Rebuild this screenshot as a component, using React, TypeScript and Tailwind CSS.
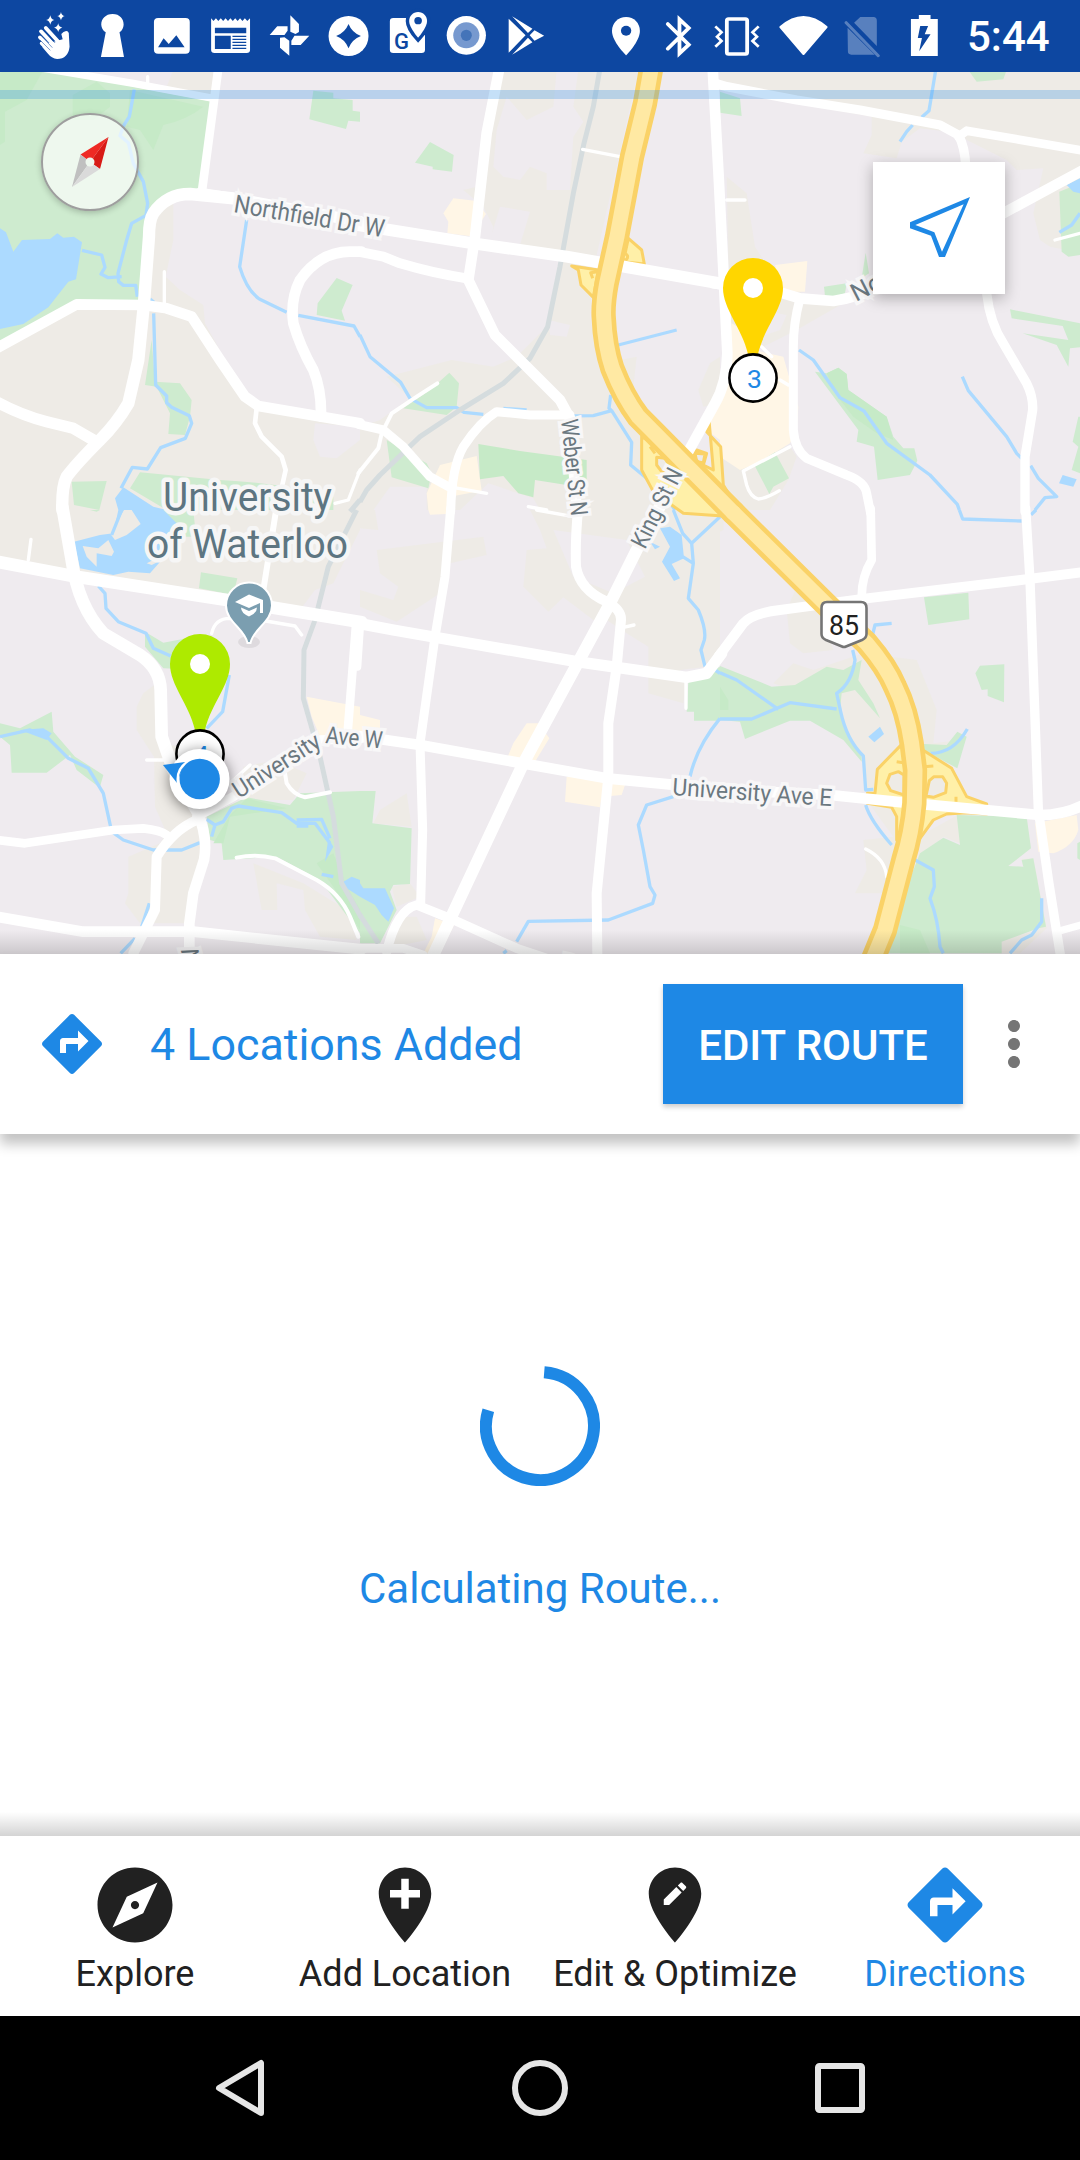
import React from "react";

type Line = [number, string];
type Tile = {
  x: number;
  y: number;
  beige: string[];
  pink?: string[];
  tan: string[];
  green: string[];
  deep?: string[];
  lake: string[];
  clearing?: string[];
  stream: string;
  rail?: string;
  ramps?: string[];
  holes?: string[];
  roads: Line[];
  highway?: string;
};

/* Map geometry, split in 360px wide tiles; each tile uses three units per pixel. */
const tiles: Tile[] = [
  {
    x: 0,
    y: 70,
    beige: [
      "M0 820L230 700L430 690L450 440L520 400L520 510L497 620L540 660L610 705L615 760L730 970L780 1010L1080 1060V1320H0Z",
      "M520 0H640V80L500 50Z",
    ],
    pink: ["M945 1060L940 1110L960 1160L1010 1165L1080 1110V1070Z"],
    tan: [],
    green: [
      "M0 0H160L400 50L640 95L605 360L540 360L470 400L440 450L415 690L230 690L0 820Z",
      "M940 62L1000 68V85L1058 90V122L1080 125V155L1045 152L1038 177L928 148Z",
      "M1010 624L1058 645L1025 722L1035 752L950 735L953 700Z",
      "M455 810L465 935L540 940L575 990L570 1040L555 1095L505 1092L510 1030L470 950L435 945Z",
      "M215 1235L320 1233L298 1320L222 1305Z",
      "M420 1207L660 1230Q850 1240 1000 1280L1000 1320H500L390 1255Z",
    ],
    deep: [
      "M390 60L610 110Q560 150 490 165L460 240L420 180L380 170Z",
      "M20 0H130L80 90L15 125V215L0 225V10Z",
      "M218 75L290 35L330 70V110L280 150H218Z",
    ],
    lake: [
      "M0 475L18 487L40 545L66 510L150 507L172 490L190 503L222 500L246 517L228 628L205 635L145 712L70 762L0 777Z",
      "M370 1252L460 1310L500 1320H355L345 1285Z",
    ],
    stream:
      "M403 58L388 140L372 165L360 197L385 218L400 280L430 335L443 400L438 436L395 460L380 510L354 610L356 635L370 646H407L412 680M246 541L305 555L315 592L303 612L325 623L365 620M450 687L462 697M461 730L467 945L500 978V998L515 1012L568 1037L575 1060L556 1105L482 1133L442 1197L397 1192L363 1255M740 450L719 590Q740 660 778 687L860 727M895 736L1062 768L1080 800",
    rail: "M1080 1290L1050 1325",
    roads: [
      [26, "M655 -5L605 370"],
      [32, "M-20 840L230 703L430 705L500 715L575 740L660 870L735 980L775 1008L1080 1060"],
      [37, "M700 385L570 372Q500 372 460 430Q447 450 447 500L432 700L415 870L385 1000Q350 1060 300 1110Q230 1180 200 1220Q185 1250 187 1320"],
      [34, "M-20 990Q60 1035 140 1055L220 1075L280 1110"],
      [22, "M130 -5L400 40L640 85"],
      [34, "M600 370L730 390L1080 455"],
      [32, "M1085 545H1050Q960 545 900 630Q870 690 880 760Q900 830 940 900Q965 960 963 1040"],
      [10, "M493 605V710M443 20V45"],
      [14, "M770 1015L765 1060L785 1100L845 1160L857 1200L830 1320"],
      [10, "M1080 1200L1045 1290L1005 1300"],
    ],
  },
  {
    x: 360,
    y: 70,
    beige: [
      "M400 0H835L700 600L690 740L720 880L830 1040L860 1100L1080 1320H0V1070L60 1050L150 985L80 920L275 870L400 890L470 860L560 770L600 560L390 530L400 470L370 410L310 360L350 350Z",
      "M1080 860L1050 880L1015 960L1030 1010L1080 1000Z",
      "M780 870L830 860L820 950L800 910Z",
    ],
    pink: [
      "M590 0H655L640 110L670 155L640 200L630 360H560V310L510 290L480 330L430 320L400 290L410 180L440 80L500 150L580 110Z",
      "M420 410L510 425L480 525L390 510Z",
      "M565 750L630 765L620 800L570 795Z",
      "M385 1240L520 1285L540 1320H300Z",
      "M90 1250L200 1250L200 1320H40Z",
    ],
    tan: [
      "M280 385L350 393L378 432L360 460L345 500L262 490L265 455L250 430Z",
      "M240 1185L350 1158L365 1262L270 1280L260 1320H205L200 1270Z",
      "M1050 1010L1080 1000V1110L1040 1080Z",
    ],
    green: [
      "M210 216L281 255L276 305L218 298V290L165 278Z",
      "M268 908L297 940L290 1010L260 1035L130 1015L210 960Z",
      "M80 1110L200 1180L215 1210L205 1255L95 1222Z",
    ],
    deep: ["M355 1122L480 1143L680 1170V1240L620 1245L525 1230L520 1282L475 1270L430 1218L360 1228Z"],
    lake: [],
    stream:
      "M0 795L30 860L122 937L150 985L200 1013H290L312 1027L370 1033M430 1015L500 1020M595 1038L700 1037L755 1022L815 1117L812 1185L860 1225M755 1022L747 1015L752 975M775 825L950 780M935 1305L945 1320",
    rail: "M720 -5L700 110L672 220L640 370L600 590L563 770L510 865L430 940L300 1020L180 1100L60 1215L20 1260L0 1295",
    ramps: [
      "M805 505L845 540L853 582L790 575Z",
      "M635 588L655 600L663 645L700 682L715 600Z",
      "M793 550Q808 555 800 568Q790 572 785 562",
      "M712 605L692 608L698 625",
      "M845 1100V1200L880 1265L970 1330L1120 1340L985 1180Z",
      "M1047 1050L1040 1085L1082 1130L1090 1245L1130 1310L985 1165L1010 1140L1040 1150L1030 1185L1060 1200Z",
      "M870 1130L885 1150",
    ],
    holes: ["M890 1162L915 1165L930 1190L905 1205L890 1185Z", "M1005 1150L1035 1152L1030 1178L1010 1175Z"],
    roads: [
      [32, "M418 -5L380 190L345 500L325 630L405 795L510 900L600 990L630 1045L650 1320"],
      [36, "M-5 465L340 520L620 560L1090 642"],
      [30, "M-5 545L70 560L120 580Q220 610 320 625"],
      [27, "M630 1035L510 1035L410 1025Q360 1055 310 1130Q275 1190 272 1325"],
      [27, "M-5 1063L70 1080L130 1130L210 1220L265 1250"],
      [12, "M232 940L170 980L95 1030L65 1090L55 1135L-5 1210"],
      [10, "M265 1250L380 1270M668 238L780 260M505 1310L560 1320"],
    ],
    highway: "M874 -8L855 100L816 260L771 500L740 640Q729 700 731 740Q735 830 757 895Q790 980 835 1040L885 1090L1120 1328",
  },
  {
    x: 720,
    y: 70,
    beige: [
      "M0 0H1080V480L1040 540L990 530L960 510L940 430L970 295L890 300L860 270L740 210L720 190L600 175L545 215L530 265L430 250L455 195V140L0 60Z",
      "M20 320L80 370L105 530L150 600L260 680L370 700L230 780L130 830L60 830L25 780V580Z",
      "M0 1150L60 1195L110 1130L210 1130L230 1160L205 1230L150 1320H0Z",
    ],
    pink: ["M150 725L200 735L180 780L120 800Z"],
    tan: [
      "M165 585L262 573L255 665L190 665Z",
      "M35 760L70 780L100 840L190 860L210 930L235 1010L230 1080L210 1120L110 1180L60 1200L0 1160V1000L20 930Z",
    ],
    green: [
      "M745 0H860L850 28L770 35Z",
      "M0 65L60 85L65 138L0 128Z",
      "M312 650L380 640L375 670L350 678H315Z",
      "M437 548L447 610L425 625Z",
      "M870 718L1080 760V832L1050 835L1045 890L1010 825L908 790L1045 810L1028 768L875 745Z",
      "M1018 365L1080 340V555L1045 560L1025 545Z",
      "M285 905L320 910L355 893L380 912L385 960L500 1040L520 1100L550 1135H583L592 1172L570 1215L473 1230L462 1130L410 1115L415 1080Z",
      "M103 1185L165 1147L207 1225L160 1250L148 1272Z",
      "M1075 1040H1080V1210L1055 1200L1075 1130L1058 1115Z",
    ],
    deep: ["M320 910L345 970L400 1040L470 1090L520 1110L500 1040L385 960L380 912L355 893Z"],
    lake: ["M1040 345L1080 325V370L1060 365Z", "M1028 1215L1070 1228L1060 1250L1017 1240Z"],
    stream:
      "M648 -5L627 122L605 142M578 165L560 185L540 215M1080 430L1055 465L1018 487M237 840L280 870L360 983L432 1023L500 1120L630 1215L712 1303L718 1320M727 920L745 962L860 1100L890 1150L905 1165M932 1187L955 1225L1010 1280L975 1283L945 1320",
    roads: [
      [28, "M-20 38L20 50L230 90L420 120L660 165L715 195Q735 230 737 290L750 450L800 670Q810 760 850 820L920 940Q940 980 938 1020L915 1160V1325"],
      [26, "M715 200L740 182L1090 242"],
      [32, "M-20 640L190 670L240 685L340 693Q420 680 480 650L840 435L1090 300"],
      [27, "M240 685Q220 760 220 830V1080Q225 1140 260 1165L380 1215Q435 1235 440 1270L452 1330"],
      [10, "M20 390H75M1005 510L1080 490M210 1130L70 1203L80 1245Q90 1280 115 1287Q140 1285 178 1262M180 930L205 945M125 830L155 860"],
      [32, "M-22 -5L-5 300L10 600L22 850Q20 940 -15 1000L-98 1150"],
    ],
  },
  {
    x: 0,
    y: 510,
    beige: [
      "M0 0H1080V60L1000 220L945 240L900 300L820 285L680 260L230 190L0 140Z",
      "M410 590L430 550L470 520L500 700L560 720L600 900L610 1000L575 1150L560 1240H420L375 1180L385 1150V1040L480 1000L500 970L465 890L462 740L410 660Z",
      "M760 1060L910 1120L1040 1200L1070 1290L960 1280L915 1200L910 1140L830 1120L832 1200H785Z",
      "M730 770L830 750L920 790L880 870L730 870Z",
    ],
    tan: ["M920 560L1080 590V690L960 680L935 620Z"],
    green: [
      "M603 187L712 205L700 255L597 235Z",
      "M435 365L490 398L560 385L600 400V480L490 475L435 410Z",
      "M0 640L60 655L155 605L160 665L225 740L310 795L300 830L315 845L230 780L210 735L140 788H35L30 705L0 680Z",
      "M620 920L740 862L870 885L900 850L1080 843V1270L960 1110L830 1040L670 1050L665 1000L630 990Z",
      "M270 0H300L290 5Z",
      "M480 0H580L585 50V80H530L500 60Z",
    ],
    deep: ["M740 865L690 915L640 1000L670 1000L690 920L860 895Z", "M950 1060L1000 1030L1040 1130L1080 1200V1260L1000 1130Z"],
    lake: [
      "M355 0H490L530 40L520 90L485 150L450 190L385 185L340 195L240 175L222 95L300 75L340 70Z",
      "M1030 1115L1055 1100L1080 1110V1160L1040 1135Z",
      "M60 660L130 655L155 670L140 690Z",
      "M985 985L1000 1010L975 1055Z",
    ],
    clearing: ["M372 0H395L422 42L380 75L345 90L330 70L355 30Z", "M248 108L295 115L325 90L342 125L335 138L290 130L290 170L260 140Z", "M440 160L480 140L485 150L455 165Z"],
    stream:
      "M365 0L335 75M0 680L90 660L140 680L205 745L265 775L310 850L335 965L370 990L460 1020H545L600 998M295 228L315 250L318 295L355 335L438 370L460 415L512 438M688 495L668 605L620 655M620 928L645 945L670 935L695 895L715 888L845 908L890 940H945L990 1000M890 948H925M890 930L965 928L990 985M645 945L635 980M448 1180L425 1250M405 1285L362 1330M965 1093L1000 1100",
    rail: "M1070 0L985 170L945 330L912 420L910 565L960 740L1000 920L1025 1120L1085 1225",
    roads: [
      [38, "M-10 155L230 200L680 270L1085 337"],
      [38, "M187 -10L215 150Q235 290 310 370L420 435Q480 475 482 540L485 680L520 780L590 900"],
      [30, "M590 930Q520 960 470 1040L465 1200L400 1330"],
      [32, "M590 900Q625 980 612 1050L580 1150L568 1240V1330"],
      [26, "M-10 990L75 1000L340 960L430 955Q480 960 500 975"],
      [32, "M-10 1220L250 1265H580L1085 1318"],
      [28, "M590 920L700 860L830 775L960 690L1085 685"],
      [26, "M1068 345L1042 680"],
      [10, "M93 88L85 150M440 750H490M635 370Q645 325 690 325L780 330L885 348L905 375M690 820L750 765"],
      [18, "M830 -10L790 240"],
      [12, "M855 790L860 820Q880 855 915 862L990 847M710 1043Q770 1030 825 1045L950 1110Q1020 1150 1050 1220L1075 1280"],
    ],
  },
  {
    x: 360,
    y: 510,
    beige: [
      "M0 0H45L55 60L0 55Z",
      "M50 120L370 80L380 135L270 160L240 250L110 335L0 290V240L100 270L115 230L60 190Z",
      "M330 0H1080V420L1040 470L960 480L980 520L970 580L865 550V410L800 370L740 330L700 330L610 262L565 305L490 230L500 120L560 115L540 60L510 0Z",
      "M40 940L60 900L140 850L155 950Z",
      "M95 1130L150 1120L180 1160L110 1190Z",
      "M120 1220H170L200 1290L100 1310Z",
    ],
    pink: ["M580 60L800 90L855 200L760 250L640 200Z"],
    tan: [
      "M205 0H260V12L210 14Z",
      "M0 615L60 630V670L0 665Z",
      "M500 640L535 640L568 685L525 755L443 740L460 700Z",
      "M620 800L720 800L795 825L785 855L725 860L720 892L615 875Z",
      "M225 1225L282 1245L240 1330H190L215 1280Z",
    ],
    green: [
      "M0 843H47L37 940L155 955L150 1122L100 1125L90 1145L110 1200L60 1300H0Z",
      "M985 515L1080 470V632H1002V605H980Z",
    ],
    lake: [
      "M0 1120L10 1135H75L102 1195L85 1235L65 1215L45 1185L0 1160Z",
      "M900 55L930 50L965 75L972 145L935 162L960 205L942 213L906 155L930 110Z",
      "M870 95L900 110L885 118Z",
    ],
    stream:
      "M940 0L968 70L995 100L1080 20M995 100L1000 160L985 265L1015 300Q1040 360 1033 390L1023 420L1035 470M968 140L1000 160M1065 480L1080 490M1080 625Q1010 710 990 800M940 860L860 885L835 945L850 1020L870 1130L885 1155L878 1180L745 1230L505 1234L470 1295M440 1322L430 1330",
    rail: "M0 1215L55 1300",
    roads: [
      [34, "M-5 340L100 360L650 455L980 502L1040 490L1085 430"],
      [27, "M272 -5L255 200L225 380L180 700L188 960L182 1180"],
      [36, "M910 -30L830 120L750 280L490 760L220 1335"],
      [30, "M655 -10Q645 90 648 170Q660 240 740 275Q785 300 783 330L770 470L745 640V800L710 1150L712 1335"],
      [32, "M-5 678L180 705L740 805L1085 838"],
      [28, "M80 1325Q110 1200 170 1185L270 1225L470 1315L560 1345"],
      [24, "M0 350L-8 470"],
      [10, "M978 510V595M530 0L640 20M790 352L822 345"],
      [26, "M-5 1315H130L190 1335"],
    ],
  },
  {
    x: 720,
    y: 510,
    beige: [
      "M230 230L300 310L340 420L250 430L210 400L200 300Z",
      "M160 520L220 460L280 480L430 430L590 450L650 600L640 700L720 690L560 1000L740 900L720 1000L670 980L550 1080L490 1150H405L440 1080L430 990L520 980L440 870L430 740L370 680V600Z",
      "M0 0L10 20V60L0 65Z",
      "M905 1047L940 1045L980 1255L900 1330H790L850 1290L950 1260Z",
    ],
    tan: ["M945 940L1070 915L1075 960Q1060 1010 1000 1030L955 1025Z"],
    green: [
      "M0 468L155 530L225 525L320 470L370 480L425 450L415 510L460 580L480 625L405 540L365 550L360 600L370 640L425 740V755L370 690L270 632H210L75 687L60 635L0 630Z",
      "M612 262L745 248L748 328L625 345Z",
      "M780 467L853 463L852 577L803 558V538L785 540L766 490Z",
      "M612 702L680 705L712 665L740 680L712 775L610 720Z",
      "M600 1030L670 983L720 1005L710 915L920 920L933 1015L865 1068L910 1070L925 1085L955 1255L845 1295V1330H500L560 1130Z",
      "M905 1050L940 1045L978 1250L955 1255Z",
      "M1072 1000L1080 995V1050L1072 1045Z",
    ],
    deep: ["M0 530L25 570V600H0Z", "M540 1245L600 1260L630 1330H540Z"],
    lake: ["M445 680L480 650L492 672L463 697Z"],
    stream:
      "M718 0L728 27L905 33M933 14L948 0M0 488L50 510L175 598M0 627H95L210 578L350 597M515 340L465 345L455 385M398 420L405 450Q395 520 350 550L362 605Q380 690 430 738L437 840L460 838M437 885Q450 930 515 1005M580 1047L640 1080L643 1130L630 1165Q655 1230 660 1310L670 1330M632 730Q700 730 742 657M965 1165V1235L935 1275L905 1290L870 1330",
    ramps: [
      "M548 700L472 778L465 850L442 850V880L515 892L530 920V990L560 1010V700Z",
      "M612 722L695 775L740 860L800 882V912L740 908L680 912L640 930L600 985V722Z",
      "M530 755L560 760M610 770L640 768M708 860V875",
    ],
    holes: ["M552 795L535 785L510 793L500 820L512 842L552 855Z", "M628 812L642 800H668L680 820L677 848L640 862L618 858Z"],
    roads: [
      [30, "M-5 440L70 340Q95 310 180 300L440 265L920 208L1090 186"],
      [26, "M452 -5L455 150Q425 200 425 260"],
      [28, "M917 -5L930 210L955 900Q985 1120 1022 1340"],
      [22, "M1010 1265L1090 1243"],
      [32, "M-5 838L330 855L555 878L960 915Q1030 915 1090 885"],
      [10, "M437 1017Q495 1045 500 1100"],
    ],
    highway: "M40 8L325 290L440 400Q500 470 525 530Q560 600 575 700L585 780L583 880Q575 970 550 1050L495 1260L460 1345",
  },
];

function Layer({ draw }: { draw: (t: Tile) => React.ReactNode }) {
  return (
    <>
      {tiles.map((t) => (
        <g key={`${t.x}-${t.y}`} transform={`translate(${t.x} ${t.y}) scale(0.33333)`}>
          {draw(t)}
        </g>
      ))}
    </>
  );
}

const fills = (paths: string[] | undefined, color: string) => paths?.map((d) => <path key={d} d={d} fill={color} />);

function Label({ x, y, angle, len, size = 24, children }: { x: number; y: number; angle: number; len?: number; size?: number; children: string }) {
  return (
    <text
      transform={`translate(${x} ${y}) rotate(${angle})`}
      fontSize={size}
      textLength={len}
      lengthAdjust="spacingAndGlyphs"
      fill="#6b7880"
      stroke="#f8f7f8"
      strokeWidth="7"
      paintOrder="stroke"
    >
      {children}
    </text>
  );
}

function Pin({ x, y, color, n }: { x: number; y: number; color: string; n: string }) {
  return (
    <g transform={`translate(${x} ${y})`}>
      <path d="M0 -30A30 30 0 0 1 30 0C30 21 11 40 5 66H-5C-11 40 -30 21 -30 0A30 30 0 0 1 0 -30Z" fill={color} />
      <circle r="10" fill="#fff" />
      <circle cy="90" r="23.6" fill="#fff" stroke="#000" strokeWidth="2.6" />
      <text x="1.5" y="99.5" fontSize="26.5" textAnchor="middle" fill="#1e88e5">
        {n}
      </text>
    </g>
  );
}

function MapCanvas() {
  return (
    <svg className="block h-[882px] w-[1080px]" viewBox="0 72 1080 882" fontFamily="Roboto, sans-serif">
      <rect y="72" width="1080" height="882" fill="#efebef" />
      <Layer draw={(t) => fills(t.beige, "#eeebe6")} />
      <Layer draw={(t) => fills(t.pink, "#efebef")} />
      <Layer draw={(t) => fills(t.tan, "#fff6e6")} />
      <Layer draw={(t) => fills(t.green, "#ceebcf")} />
      <Layer draw={(t) => fills(t.deep, "#c6eac7")} />
      <Layer draw={(t) => fills(t.lake, "#acdaff")} />
      <Layer draw={(t) => fills(t.clearing, "#eeebe6")} />
      <Layer draw={(t) => <path d={t.stream} fill="none" stroke="#acdaff" strokeWidth="10" strokeLinejoin="round" />} />
      <Layer draw={(t) => t.rail && <path d={t.rail} fill="none" stroke="#d5dcde" strokeWidth="15" strokeLinejoin="round" />} />
      <Layer draw={(t) => t.ramps?.map((d) => <path key={d} d={d} fill="#fff0a8" stroke="#fad267" strokeWidth="9" strokeLinejoin="round" />)} />
      <Layer draw={(t) => t.holes?.map((d) => <path key={d} d={d} fill="#eeebe6" stroke="#fad267" strokeWidth="9" strokeLinejoin="round" />)} />
      <Layer draw={(t) => t.roads.map(([w, d]) => <path key={d} d={d} fill="none" stroke="#fff" strokeWidth={w} strokeLinejoin="round" strokeLinecap="round" />)} />
      <Layer draw={(t) => t.highway && <path d={t.highway} fill="none" stroke="#fad267" strokeWidth="73" strokeLinecap="round" strokeLinejoin="round" />} />
      <Layer draw={(t) => t.highway && <path d={t.highway} fill="none" stroke="#ffe9a3" strokeWidth="45" strokeLinecap="round" strokeLinejoin="round" />} />

      <Label x={233} y={212} angle={9.6} len={152} size={25}>Northfield Dr W</Label>
      <Label x={561} y={420} angle={84} len={97}>Weber St N</Label>
      <Label x={645} y={550} angle={-63.5} len={86}>King St N</Label>
      <Label x={239} y={799} angle={-32.5} len={99}>University</Label>
      <Label x={325} y={743} angle={5.5} len={57}>Ave W</Label>
      <Label x={672} y={795} angle={4} len={160}>University Ave E</Label>
      <Label x={856} y={302} angle={-27} size={25}>Northfield</Label>
      <Label x={203} y={966} angle={-106}>W</Label>
      <Label x={560} y={971} angle={12}>Bri</Label>

      <g fill="#5d7581" stroke="#f6f6f6" strokeWidth="9" strokeLinejoin="round" paintOrder="stroke" fontSize="41.5">
        <text x="163" y="511" textLength="169" lengthAdjust="spacingAndGlyphs">University</text>
        <text x="147" y="558" textLength="201" lengthAdjust="spacingAndGlyphs">of Waterloo</text>
      </g>

      <ellipse cx="249" cy="642" rx="11" ry="6" fill="#000" opacity=".07" />
      <path d="M249 582.500A23 23 0 0 1 272 605.500C272 622 253 629 250.500 643H247.500C245 629 226 622 226 605.500A23 23 0 0 1 249 582.500Z" fill="#7b9eb0" stroke="#fff" strokeWidth="2" />
      <path d="M235 602L249 594.500L263 600V613H260V603L249 608Z" fill="#fff" />
      <path d="M241 607.500L249 611L257 607.500Q257 613 249 616.500Q241 613 241 607.500Z" fill="#fff" />

      <path d="M827 602H861Q866.500 602 866.500 608V634Q866.500 638 862 640L846 646.500Q844 647.500 842 646.500L826 640Q821.500 638 821.500 634V608Q821.500 602 827 602Z" fill="#fff" stroke="#757575" strokeWidth="2.600" />
      <text x="829" y="634.500" fontSize="27" textLength="30" lengthAdjust="spacingAndGlyphs" fill="#212121">85</text>

      <Pin x={753} y={288} color="#ffd600" n="3" />
      <Pin x={200} y={664} color="#aeea00" n="4" />
      <circle cx="199.500" cy="779" r="30" fill="#fff" className="drop-shadow-[0_2px_7px_rgba(0,0,0,0.5)]" />
      <path d="M163 765L185 762L177 783Z" fill="#1e88e5" />
      <path d="M178 783Q176 768 189 761" fill="none" stroke="#fff" strokeWidth="2.500" />
      <circle cx="199.700" cy="779" r="20.200" fill="#1e88e5" />
    </svg>
  );
}

function Compass() {
  return (
    <div className="absolute top-[41px] left-[41px] h-[98px] w-[98px] rounded-full border-2 border-[#9e9e9e] bg-white/65 shadow-[0_2px_6px_rgba(0,0,0,0.22)]">
      <svg className="h-full w-full" viewBox="43 115 94 94">
        <path d="M108.500 137L80.500 154.500L90 162Z" fill="#ee2a24" />
        <path d="M108.500 137L100 169L90 162Z" fill="#d81b16" />
        <path d="M72 187L80.500 154.500L90 162Z" fill="#c0c0c0" />
        <path d="M72 187L100 169L90 162Z" fill="#dadada" />
        <circle cx="90" cy="162" r="4.500" fill="#eef7ee" />
      </svg>
    </div>
  );
}

function Glyph({ d, className }: { d: string; className: string }) {
  return (
    <svg className={className} viewBox="0 0 24 24" fill="currentColor">
      <path d={d} />
    </svg>
  );
}

const icons = {
  directions:
    "M21.71 11.29l-9-9c-.39-.39-1.02-.39-1.41 0l-9 9c-.39.39-.39 1.02 0 1.41l9 9c.39.39 1.02.39 1.41 0l9-9c.39-.38.39-1.01 0-1.41zM14 14.5V12h-4v3H8v-4c0-.55.45-1 1-1h5V7.5l3.5 3.5-3.5 3.5z",
  more: "M12 8c1.1 0 2-.9 2-2s-.9-2-2-2-2 .9-2 2 .9 2 2 2zm0 2c-1.1 0-2 .9-2 2s.9 2 2 2 2-.9 2-2-.9-2-2-2zm0 6c-1.1 0-2 .9-2 2s.9 2 2 2 2-.9 2-2-.9-2-2-2z",
  explore:
    "M12 10.9c-.61 0-1.1.49-1.1 1.1s.49 1.1 1.1 1.1c.61 0 1.1-.49 1.1-1.1s-.49-1.1-1.1-1.1zM12 2C6.48 2 2 6.48 2 12s4.48 10 10 10 10-4.48 10-10S17.52 2 12 2zm2.19 12.19L6 18l3.81-8.19L18 6l-3.81 8.19z",
  add: "M12 2C8.14 2 5 5.14 5 9c0 5.25 7 13 7 13s7-7.75 7-13c0-3.86-3.14-7-7-7zm4 8h-3v3h-2v-3H8V8h3V5h2v3h3v2z",
  edit: "M12 2C8.14 2 5 5.14 5 9c0 5.25 7 13 7 13s7-7.75 7-13c0-3.86-3.14-7-7-7zm-1.56 10H9v-1.44l3.35-3.34 1.43 1.43L10.44 12zm4.45-4.45l-.7.7-1.44-1.44.7-.7c.15-.15.39-.15.54 0l.9.9c.15.15.15.39 0 .54z",
};

function StatusIcon({ x, w, origin = 0, children }: { x: number; w: number; origin?: number; children: React.ReactNode }) {
  return (
    <svg className="h-[72px] shrink-0" width={w} height={72} viewBox={`${x} 0 ${w} 72`} fill="#fff">
      <g transform={`translate(${origin} 0) scale(0.3444 0.3333)`}>{children}</g>
    </svg>
  );
}

const BLUE = "#0d47a1";

function StatusBar() {
  return (
    <header className="flex h-[72px] items-center bg-[#0d47a1] pl-6">
      <StatusIcon x={24} w={59}>
        <g stroke="#fff" strokeLinecap="round" strokeWidth="11">
          <path d="M133 84L178 135M119 94L165 145M116 112L160 155M121 130L152 160" />
        </g>
        <path d="M140 130L182 118L178 102Q184 94 192 93Q201 94 200 105L202 140Q198 176 166 177Q150 176 138 160L122 140Z" />
        <path d="M128 92L160 129M117 104L152 143M116 120L146 151" stroke={BLUE} strokeWidth="1.600" />
        <path d="M146 46Q148 58 158 60Q148 62 146 74Q144 62 134 60Q144 58 146 46ZM177 36Q179 47 188 48Q179 50 177 61Q175 50 166 48Q175 47 177 36ZM169 70Q171 81 181 83Q171 85 169 96Q167 85 157 83Q167 81 169 70Z" />
      </StatusIcon>
      <StatusIcon x={83} w={59}>
        <path d="M327 42C306 42 294 57 294 74Q295 89 307 97L293 171H360L347 97Q358 89 359 74C359 57 348 42 327 42Z" />
      </StatusIcon>
      <StatusIcon x={142} w={59}>
        <rect x="447" y="54" width="104" height="107" rx="12" />
        <path d="M459 142L475 115L490 132L512 106L536 142Z" fill={BLUE} />
      </StatusIcon>
      <StatusIcon x={201} w={59}>
        <path d="M613 55L620 63L627 55L634 63L641 55L648 63L655 55L662 63L669 55L676 63L683 55L690 63L697 55L704 63L711 55L718 63L726 55V150Q726 159 716 159H623Q613 159 613 150Z" />
        <path d="M624 83H715V100H624ZM624 107H670V147H624ZM675 107H715V111H675ZM675 116H715V120H675ZM675 125H715V129H675ZM675 134H715V138H675ZM675 143H715V147H675Z" fill={BLUE} />
      </StatusIcon>
      <StatusIcon x={260} w={59}>
        <path d="M843 46L868 72V96L858 102L843 95ZM783 105L805 79H835V92L826 105ZM898 107L873 135H846V122L855 107ZM840 167L813 143V113L826 112L840 122Z" />
      </StatusIcon>
      <StatusIcon x={319} w={60}>
        <ellipse cx="1012" cy="108" rx="58" ry="60" />
        <path d="M1012 72Q1022 98 1048 108Q1022 118 1012 145Q1002 118 976 108Q1002 98 1012 72Z" fill={BLUE} />
      </StatusIcon>
      <StatusIcon x={379} w={59}>
        <path d="M1142 54H1214V105H1234V149Q1234 159 1224 159H1142Q1132 159 1132 149V64Q1132 54 1142 54Z" />
        <text x="1166" y="146" fontSize="64" fontWeight="500" textAnchor="middle" fill={BLUE} fontFamily="Roboto, sans-serif">
          G
        </text>
        <path d="M1214 36c-15 0-26 12-26 27 0 20 26 50 26 50s26-30 26-50c0-15-11-27-26-27z" stroke={BLUE} strokeWidth="20" paintOrder="stroke" />
        <circle cx="1214" cy="62" r="11" fill={BLUE} />
      </StatusIcon>
      <StatusIcon x={438} w={58}>
        <ellipse cx="1354" cy="106" rx="57" ry="58" />
        <ellipse cx="1354" cy="106" rx="38" ry="39" fill="#7799cf" />
        <ellipse cx="1354" cy="106" rx="16" ry="17" fill="#4474b9" />
      </StatusIcon>
      <StatusIcon x={496} w={104}>
        <path d="M1477 56V158L1526 106ZM1487 49L1546 86L1533 99ZM1552 91L1580 107L1552 122L1538 106ZM1487 164L1546 127L1533 113Z" />
      </StatusIcon>
      <StatusIcon x={600} w={52} origin={540}>
        <path d="M250 51c-23 0-41 18-41 42 0 32 41 73 41 73s40-41 40-73c0-24-17-42-40-42z" />
        <circle cx="250" cy="92" r="15" fill={BLUE} />
      </StatusIcon>
      <StatusIcon x={652} w={53} origin={540}>
        <path d="M371 72L432 134L405 160V58L432 84L371 146" fill="none" stroke="#fff" strokeWidth="11" strokeLinecap="round" />
      </StatusIcon>
      <StatusIcon x={705} w={63} origin={540}>
        <g fill="none" stroke="#fff">
          <rect x="542.500" y="57" width="59" height="105" rx="5" strokeWidth="11" />
          <path d="M509 79L527 97L514 110L527 123L509 140M635 79L617 97L630 110L617 123L635 140" strokeWidth="8" />
        </g>
      </StatusIcon>
      <StatusIcon x={768} w={71} origin={540}>
        <path d="M765 162L698 81Q765 21 832 81Z" stroke="#fff" strokeWidth="6" strokeLinejoin="round" />
      </StatusIcon>
      <StatusIcon x={839} w={46} origin={540}>
        <g opacity=".31">
          <path d="M930 51H968Q978 51 978 62V138L912 68ZM893 83L972 164H904Q894 164 894 154Z" />
          <path d="M889 68L982 167" stroke="#fff" strokeWidth="9" strokeLinecap="round" />
        </g>
      </StatusIcon>
      <StatusIcon x={885} w={82} origin={540}>
        <path d="M1077 57H1100V45H1134V57H1155V168H1077Z" />
        <path d="M1104 78H1127L1117 103H1134L1101 154L1109 114H1097Z" fill={BLUE} />
      </StatusIcon>
      <span className="pt-0.5 text-[42px] leading-none font-medium text-white">5:44</span>
    </header>
  );
}

const tabs = [
  { label: "Explore", icon: icons.explore },
  { label: "Add Location", icon: icons.add },
  { label: "Edit & Optimize", icon: icons.edit },
  { label: "Directions", icon: icons.directions, active: true },
];

export default function App() {
  return (
    <div className="flex h-[2160px] w-[1080px] flex-col overflow-hidden bg-white font-['Roboto',sans-serif]">
      <StatusBar />

      <section className="relative h-[882px] overflow-hidden">
        <MapCanvas />
        <div className="absolute inset-x-0 top-[18px] h-[9px] bg-[#1e88e5]/[0.26]" />
        <div className="absolute inset-x-0 bottom-0 h-6 bg-linear-to-t from-black/15 to-transparent" />
        <Compass />
        <button className="absolute top-[90px] left-[873px] flex h-[132px] w-[132px] items-center justify-center bg-white text-[#1e88e5] shadow-[0_4px_14px_rgba(0,0,0,0.28)]">
          <svg className="h-20 w-20" viewBox="537 354 240 240" fill="currentColor" fillRule="evenodd">
            <path d="M750 381L570 457V475L633 497L657 561H675ZM731 403L586 465L643 487L666 545Z" />
          </svg>
        </button>
      </section>

      <section className="relative flex h-[180px] items-center bg-white pr-[30px] pl-9 shadow-[0_10px_12px_rgba(0,0,0,0.24)]">
        <Glyph d={icons.directions} className="h-[72px] w-[72px] text-[#1e88e5]" />
        <h1 className="ml-[42px] flex-1 pt-0.5 text-[44.8px] leading-none whitespace-nowrap text-[#1e88e5]">4 Locations Added</h1>
        <button className="h-[120px] w-[300px] bg-[#1e88e5] pt-[3px] text-[42px] leading-none font-medium whitespace-nowrap text-white shadow-[0_3px_5px_rgba(0,0,0,0.2)]">
          EDIT ROUTE
        </button>
        <Glyph d={icons.more} className="ml-[15px] h-[72px] w-[72px] text-[#757575]" />
      </section>

      <main className="flex flex-1 flex-col items-center pt-[232px]">
        <svg className="h-[120px] w-[120px]" viewBox="0 0 120 120" fill="none">
          <path d="M64.200 6.200A54 54 0 1 1 8.300 44.300" stroke="#1e88e5" strokeWidth="12" />
        </svg>
        <p className="mt-[82px] text-[42px] leading-none text-[#1e88e5]">Calculating Route...</p>
      </main>

      <div className="h-6 bg-linear-to-t from-black/17 to-transparent" />
      <nav className="grid h-[180px] grid-cols-4 bg-white">
        {tabs.map((t) => (
          <button key={t.label} className={t.active ? "flex flex-col items-center pt-6 text-[#1e88e5]" : "flex flex-col items-center pt-6 text-[#212121]"}>
            <Glyph d={t.icon} className="h-[90px] w-[90px]" />
            <span className="mt-1.5 text-[36px] leading-none whitespace-nowrap">{t.label}</span>
          </button>
        ))}
      </nav>

      <footer className="flex h-36 items-center justify-center gap-[228px] bg-black">
        <svg className="h-[72px] w-[72px]" viewBox="204 2052 72 72" fill="none" stroke="#e6e6e6" strokeWidth="6" strokeLinejoin="round">
          <path d="M261 2063V2113L219 2088Z" />
        </svg>
        <svg className="h-[72px] w-[72px]" viewBox="0 0 72 72" fill="none" stroke="#e6e6e6" strokeWidth="6">
          <circle cx="36" cy="36" r="25" />
        </svg>
        <svg className="h-[72px] w-[72px]" viewBox="0 0 72 72" fill="none" stroke="#e6e6e6" strokeWidth="6">
          <rect x="14" y="14" width="44" height="44" rx="1.500" />
        </svg>
      </footer>
    </div>
  );
}
